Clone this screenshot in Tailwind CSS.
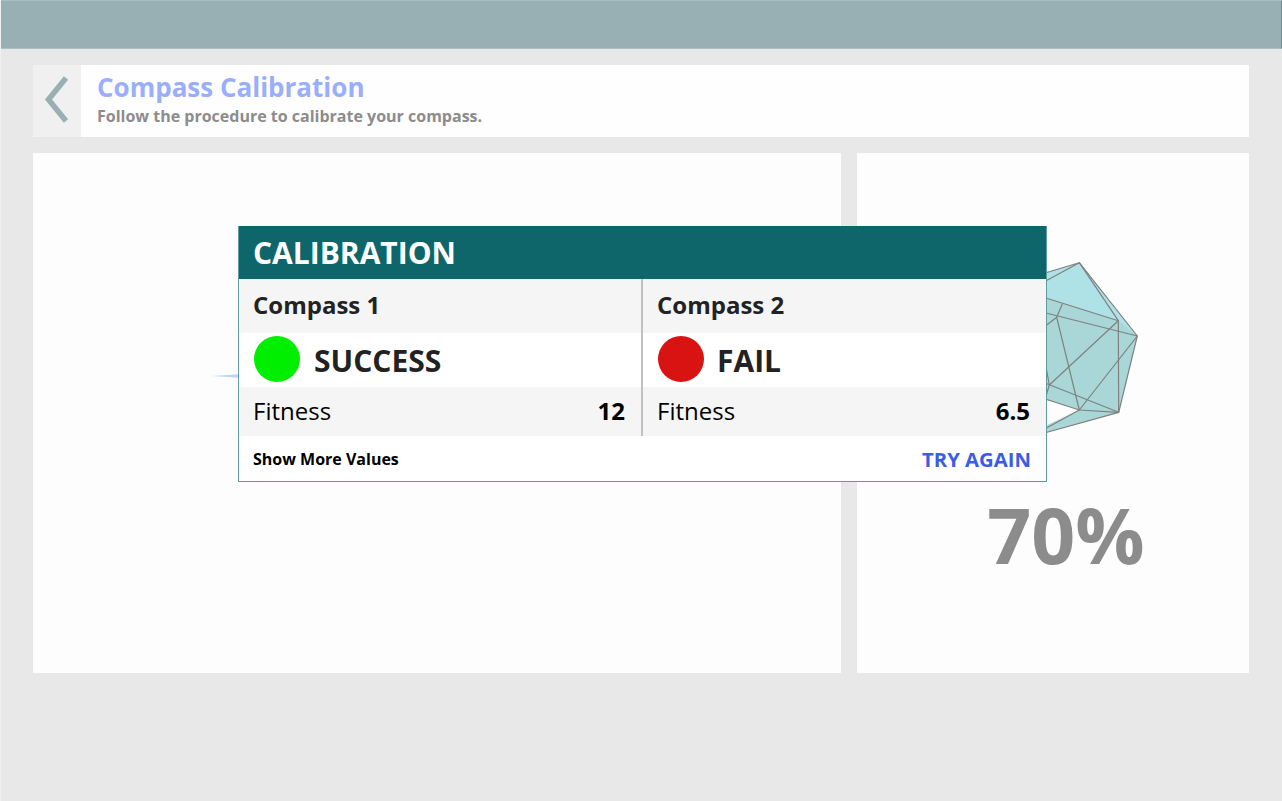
<!DOCTYPE html>
<html lang="en">
<head>
    <meta charset="UTF-8">
    <title>Compass Calibration</title>
    <script src="https://cdn.jsdelivr.net/npm/@tailwindcss/browser@4"></script>
</head>
<body class="font-['Open_Sans',sans-serif] bg-[#e8e8e8] h-[801px] overflow-hidden relative border-l border-l-[#f0f0f0]">
    <!-- top bar -->
    <div class="h-[49px] -ml-px bg-[#98b0b3] border border-[#a9bfc1] border-r-[#6f8f92]"></div>

    <div class="pl-[32px] pr-[33px] pt-4">
        <!-- page header -->
        <div class="h-[72px] bg-[#fefefe] flex">
            <div class="w-[48px] bg-[#f0f0f0] flex items-center justify-center">
                <svg width="48" height="72" viewBox="0 0 48 72">
                    <path d="M33 13 L15.5 34.5 L33 56" fill="none" stroke="#98b0b3" stroke-width="5.5"/>
                </svg>
            </div>
            <div class="pl-4 pt-[3px]">
                <h1 class="text-[26px] leading-[38px] font-bold text-[#9aaefb]">Compass Calibration</h1>
                <p class="text-[16px] leading-[20px] font-bold text-[#8c8c8c]">Follow the procedure to calibrate your compass.</p>
            </div>
        </div>

        <!-- panels -->
        <div class="flex gap-4 mt-4 h-[520px]">
            <div class="w-[808px] bg-[#fdfdfd]"></div>
            <div class="w-[392px] bg-[#fdfdfd] flex justify-center">
                <span class="text-[77px] leading-[110px] font-bold text-[#8c8c8c] mt-[327px] ml-[26px]">70%</span>
            </div>
        </div>
    </div>

    <!-- sphere sitting behind the dialog -->
    <svg class="absolute left-[999px] top-[240px]" width="150" height="210" viewBox="1000 240 150 210" stroke="#808080" stroke-width="1.2" stroke-linejoin="round" fill="none">
        <path d="M1030 277 L1079.3 262.7 L1137.3 336 L1118.7 412.3 L1079.3 410 L1030 395 Z" fill="#a9d6d6" stroke="none"/>
        <path d="M1030 433 L1079.3 410 L1118.7 412.3 L1030 437 Z" fill="#a9d6d6" stroke="none"/>
        <path d="M1030 277 L1079.3 262.7 L1137.3 336 L1118.3 320.7 L1030 293 Z" fill="#aee2e6" stroke="none"/>
        <path d="M1030 277.5 L1079.3 262.7 L1137.3 336 L1118.7 412.3 L1030 437"/>
        <path d="M1030 289.5 L1079.3 262.7 L1118.3 320.7 L1118.7 412.3 L1030 377"/>
        <path d="M1030 293 L1118.3 320.7 L1049.3 385 L1030 450"/>
        <path d="M1030 309 L1137.3 336 L1079.3 410 L1056.7 317.3 L1030 338"/>
        <path d="M1062.3 304 L1056.7 317.3"/>
        <path d="M1079.3 410 L1118.7 412.3"/>
        <path d="M1030 394 L1079.3 410 L1030 437"/>
        <path d="M1046 367 L1049.3 385"/>
    </svg>

    <!-- sliver from the compass needle -->
    <div class="absolute left-[211px] top-[374px] w-[30px] h-[4px] bg-[#bcd6fb] [clip-path:polygon(0_50%,100%_0,100%_100%)]"></div>

    <!-- calibration dialog -->
    <div class="absolute left-[237px] top-[226px] w-[809px] h-[256px] border border-[#5f9c9d] bg-white flex flex-col">
        <div class="h-[53px] shrink-0 -mt-px bg-[#0e666a] px-[14px] flex items-center text-white text-[30px] font-bold">CALIBRATION</div>
        <div class="grid grid-cols-[404px_1fr] h-[157px]">
            <div class="border-r-2 border-[#c0c0c0] flex flex-col">
                <div class="h-[54px] bg-[#f5f5f5] px-[14px] pb-[3px] flex items-center text-[24px] font-bold text-[#222]">Compass 1</div>
                <div class="h-[54px] px-[15px] pb-[2px] flex items-center gap-[14px] text-[30px] font-bold text-[#222]">
                    <span class="w-[46px] h-[46px] rounded-full bg-[#00ee00]"></span><span class="pt-[2px]">SUCCESS</span>
                </div>
                <div class="h-[49px] bg-[#f5f5f5] pl-[14px] pr-[16px] pb-[2px] flex items-center justify-between text-[24px] text-black">
                    <span>Fitness</span><span class="font-bold">12</span>
                </div>
            </div>
            <div class="flex flex-col">
                <div class="h-[54px] bg-[#f5f5f5] px-[14px] pb-[3px] flex items-center text-[24px] font-bold text-[#222]">Compass 2</div>
                <div class="h-[54px] px-[15px] pb-[2px] flex items-center gap-[13px] text-[30px] font-bold text-[#222]">
                    <span class="w-[46px] h-[46px] rounded-full bg-[#d91212]"></span><span class="pt-[2px]">FAIL</span>
                </div>
                <div class="h-[49px] bg-[#f5f5f5] pl-[14px] pr-[16px] pb-[2px] flex items-center justify-between text-[24px] text-black">
                    <span>Fitness</span><span class="font-bold">6.5</span>
                </div>
            </div>
        </div>
        <div class="flex-1 px-[14px] pr-[15px] flex items-center justify-between">
            <span class="text-[16px] font-bold text-black">Show More Values</span>
            <span class="text-[20.3px] font-bold text-[#3a5ce6] pt-px">TRY AGAIN</span>
        </div>
    </div>
</body>
</html>
